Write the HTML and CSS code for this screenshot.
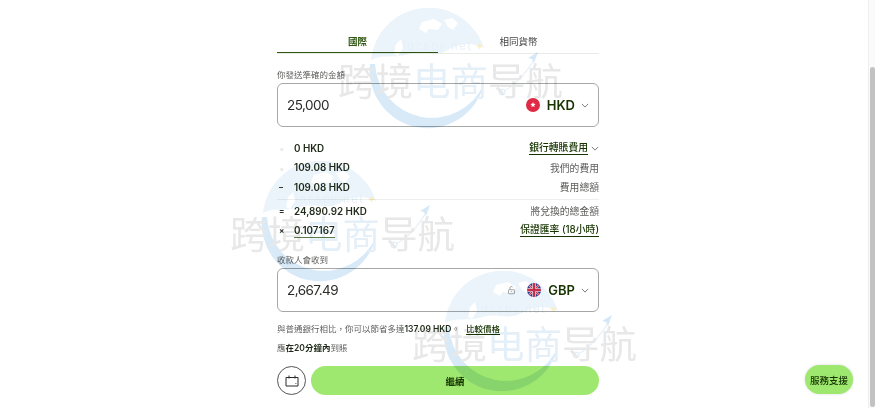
FILE: index.html
```html
<!DOCTYPE html>
<html lang="zh-Hant">
<head>
  <meta charset="UTF-8">
  <meta name="viewport" content="width=device-width, initial-scale=1.0">
  <title>國際匯款</title>
  <link rel="stylesheet" href="styles.css">
</head>
<body>
  <svg class="defs" width="0" height="0">
    <symbol id="globe" viewBox="0 0 224 125">
      <path d="M33 52A58 58 0 0 1 146 40C132 33 120 36 108 43 96 49 82 41 68 47 56 50 44 46 33 52Z" fill="#ecf4fb"/>
      <path d="M32 56A58 58 0 0 0 146 76A57 57 0 0 1 37 56Z" fill="#d8e9f8"/>
      <path d="M84 14l12-3 8 5-4 6-9-1-3 4-7-4zM106 12l8-2 6 5-5 7-5-3zM58 36l5-5 2 9-5 8-4-2z" fill="#fff"/>
      <path d="M196 52C186 68 176 78 166 83" fill="none" stroke="#e4f0fa" stroke-width="1.2"/>
      <circle cx="164" cy="84" r="3" fill="none" stroke="#dcebf8" stroke-width="1"/>
      <path d="M190 50l10-6-4 11-2-4z" fill="#d6e8f7"/>
    </symbol>
  </svg>

  <main class="form">
    <div class="tabs">
      <div class="tab active">國際</div>
      <div class="tab">相同貨幣</div>
    </div>

    <label class="field-label">你發送準確的金額</label>
    <div class="amount-box">
      <span class="amount">25,000</span>
      <svg class="flag" viewBox="0 0 16 16">
        <circle cx="8" cy="8" r="8" fill="#de2a45"/>
        <path d="M8 4.6l.8 2.1 2.2.2-1.7 1.4.5 2.1L8 9.3l-1.8 1.1.5-2.1L5 6.9l2.2-.2z" fill="#fff"/>
      </svg>
      <span class="currency">HKD</span>
      <svg class="chevron" viewBox="0 0 10 6"><path d="M1 1l4 4 4-4"/></svg>
    </div>

    <div class="fees">
      <div class="row">
        <span class="sign">•</span><span class="value">0 HKD</span>
        <span class="note link-note"><span class="link">銀行轉賬費用</span><svg class="chevron" viewBox="0 0 10 6"><path d="M1 1l4 4 4-4"/></svg></span>
      </div>
      <div class="row">
        <span class="sign">•</span><span class="value">109.08 HKD</span>
        <span class="note">我們的費用</span>
      </div>
      <div class="row">
        <span class="sign strong">–</span><span class="value">109.08 HKD</span>
        <span class="note">費用總額</span>
      </div>
      <div class="row divided">
        <span class="sign strong">=</span><span class="value">24,890.92 HKD</span>
        <span class="note">將兌換的總金額</span>
      </div>
      <div class="row">
        <span class="sign strong">×</span><span class="value"><span class="rate">0.107167</span></span>
        <span class="note link-note"><span class="link">保證匯率 (18小時)</span></span>
      </div>
    </div>

    <label class="field-label receive-label">收款人會收到</label>
    <div class="amount-box">
      <span class="amount">2,667.49</span>
      <svg class="lock" viewBox="0 0 12 12">
        <rect x="2" y="5.5" width="8" height="5.5" rx="1"/>
        <path d="M4 5.5V3.2a2 2 0 0 1 3.8-.8M5 8h2"/>
      </svg>
      <svg class="flag gb" viewBox="0 0 16 16">
        <defs><clipPath id="round"><circle cx="8" cy="8" r="8"/></clipPath></defs>
        <g clip-path="url(#round)">
          <rect width="16" height="16" fill="#2b3f8c"/>
          <path d="M0 0l16 16M16 0L0 16" stroke="#f3d5db" stroke-width="2.5"/>
          <path d="M0 0l16 16M16 0L0 16" stroke="#d8304a" stroke-width="1.2"/>
          <path d="M8 0v16M0 8h16" stroke="#fff" stroke-width="4"/>
          <path d="M8 0v16M0 8h16" stroke="#d8304a" stroke-width="2.6"/>
        </g>
      </svg>
      <span class="currency">GBP</span>
      <svg class="chevron" viewBox="0 0 10 6"><path d="M1 1l4 4 4-4"/></svg>
    </div>

    <p class="info savings">與普通銀行相比，你可以節省多達<b>137.09 HKD</b>。<a class="compare">比較價格</a></p>
    <p class="info arrival">應<b>在20分鐘內</b>到賬</p>

    <div class="actions">
      <button class="schedule">
        <svg viewBox="0 0 14 12"><path d="M1 2.5h12v8.5H1zM4 .5v3M10 .5v3"/><path d="M10.5 8.5h.8"/></svg>
      </button>
      <button class="continue">繼續</button>
    </div>
  </main>

  <button class="support">服務支援</button>
  <div class="scrollbar"><div class="thumb"></div></div>

  <div class="mark mark-top">
    <svg class="mark-globe"><use href="#globe"/></svg>
    <span class="mark-url">idcspy.net<i>✦</i></span>
    <span class="mark-name">跨境<em>电商</em>导航</span>
  </div>
  <div class="mark mark-mid">
    <svg class="mark-globe"><use href="#globe"/></svg>
    <span class="mark-url">idcspy.net<i>✦</i></span>
    <span class="mark-name">跨境<em>电商</em>导航</span>
  </div>
  <div class="mark mark-low">
    <svg class="mark-globe"><use href="#globe"/></svg>
    <span class="mark-url">idcspy.net<i>✦</i></span>
    <span class="mark-name">跨境<em>电商</em>导航</span>
  </div>
</body>
</html>
```

FILE: styles.css
```css
body {
  margin: 0;
  height: 414px;
  overflow: hidden;
  background-color: #fff;
  color: #163300;
  font-family: 'Inter', 'Noto Sans CJK TC', sans-serif;
  position: relative;
}

.defs {
  position: absolute;
}

.form {
  width: 322px;
  margin-left: 277px;
  padding-top: 33px;
  display: flex;
  flex-direction: column;
}

/* tabs */
.tabs {
  display: flex;
  height: 20px;
  border-bottom: 1px solid #e8ebe6;
}

.tab {
  flex: 1;
  text-align: center;
  font-size: 9.5px;
  line-height: 18px;
  color: #454745;
}

.tab.active {
  color: #2f5711;
  font-weight: 600;
  border-bottom: 1px solid #2f5711;
  height: 19px;
}

.field-label {
  font-size: 8.5px;
  line-height: 12px;
  color: #5d5f5c;
  margin-top: 15px;
  margin-bottom: 2px;
}

.receive-label {
  margin-top: 13.5px;
  margin-bottom: 2px;
}

/* amount inputs */
.amount-box {
  height: 44px;
  box-sizing: border-box;
  border: 1px solid #a6a8a5;
  border-radius: 6px;
  padding: 0 9px 0 9px;
  display: flex;
  align-items: center;
}

.amount {
  flex: 1;
  font-size: 13.5px;
  letter-spacing: -0.55px;
  color: #2a2c29;
}

.flag {
  width: 14px;
  height: 14px;
  margin-right: 7px;
}

.flag.gb {
  margin-right: 7px;
}

.currency {
  font-size: 13px;
  font-weight: 600;
  margin-right: 6px;
}

.chevron {
  width: 8px;
  height: 5px;
  fill: none;
  stroke: #454745;
  stroke-width: 0.9;
}

.lock {
  width: 9px;
  height: 10px;
  margin-right: 11px;
  fill: none;
  stroke: #7b7d7a;
  stroke-width: 0.9;
}

/* fee rows */
.fees {
  margin-top: 11.5px;
  display: flex;
  flex-direction: column;
}

.row {
  height: 19.5px;
  display: flex;
  align-items: center;
  font-size: 9.8px;
}

.row.divided {
  margin-top: 2px;
  padding-top: 1px;
  height: 20px;
  border-top: 1px solid #eef0ec;
}

.sign {
  width: 15px;
  padding-left: 2px;
  font-size: 10px;
  color: #e8eae6;
}

.sign.strong {
  color: #2a2c29;
  font-size: 8px;
  font-weight: 700;
}

.value {
  flex: 1;
  font-weight: 600;
  color: #1f2a18;
}

.rate {
  border-bottom: 1px solid #5f7a4d;
  padding-bottom: 1px;
}

.note {
  color: #5d5f5c;
  font-size: 9.8px;
}

.link-note {
  display: flex;
  align-items: center;
  gap: 3px;
}

.link {
  color: #163300;
  font-weight: 500;
  border-bottom: 1px solid #163300;
  line-height: 12px;
}

/* footer text */
.info {
  margin: 0;
  font-size: 8.5px;
  line-height: 12px;
  color: #5d5f5c;
}

.info b {
  color: #1f2a18;
  font-weight: 600;
}

.savings {
  margin-top: 11px;
}

.arrival {
  margin-top: 7px;
}

.compare {
  color: #163300;
  font-weight: 500;
  border-bottom: 1px solid #163300;
  margin-left: 6px;
}

.actions {
  display: flex;
  gap: 5px;
  margin-top: 12px;
}

.schedule {
  width: 29px;
  height: 29px;
  padding: 0;
  background: #fff;
  border: 1px solid #555;
  border-radius: 50%;
  display: flex;
  align-items: center;
  justify-content: center;
}

.schedule svg {
  width: 14px;
  height: 12px;
  fill: none;
  stroke: #2a2c29;
  stroke-width: 1;
}

.continue {
  flex: 1;
  height: 29px;
  border: none;
  border-radius: 15px;
  background-color: #9fe870;
  color: #163300;
  font-family: inherit;
  font-size: 9.5px;
  font-weight: 600;
}

.support {
  position: absolute;
  left: 805px;
  top: 365px;
  width: 48px;
  height: 29px;
  padding: 0;
  border: none;
  border-radius: 15px;
  background-color: #9fe870;
  color: #163300;
  font-family: inherit;
  font-size: 9.5px;
  font-weight: 500;
  box-shadow: 0 0 3px rgba(0, 0, 0, 0.15);
}

.scrollbar {
  position: absolute;
  left: 868px;
  top: 0;
  width: 7px;
  height: 408px;
  background-color: #fafafa;
  border-left: 1px solid #eee;
  box-sizing: border-box;
}

.thumb {
  position: absolute;
  left: 1px;
  top: 67px;
  width: 5px;
  height: 340px;
  border-radius: 3px;
  background-color: #c2c2c2;
}

/* watermarks */
.mark {
  position: absolute;
  width: 224px;
  height: 125px;
  pointer-events: none;
  mix-blend-mode: multiply;
}

.mark-top {
  left: 338px;
  top: 8px;
}

.mark-mid {
  left: 230px;
  top: 161px;
}

.mark-low {
  left: 412px;
  top: 271px;
}

.mark-globe {
  position: absolute;
  left: 0;
  top: 0;
  width: 224px;
  height: 125px;
}

.mark-url {
  position: absolute;
  left: 65px;
  top: 31px;
  font-size: 11px;
  line-height: 14px;
  letter-spacing: 1.6px;
  white-space: nowrap;
  color: #e6f0f8;
}

.mark-url i {
  color: #fbeec6;
  font-style: normal;
  margin-left: 3px;
}

.mark-name {
  position: absolute;
  left: 0;
  top: 47px;
  font-size: 37.5px;
  line-height: 48px;
  white-space: nowrap;
  color: #e8e8e8;
  font-family: 'Noto Sans CJK SC', sans-serif;
  font-weight: 400;
}

.mark-name em {
  font-style: normal;
  color: #e4eff8;
}
```
